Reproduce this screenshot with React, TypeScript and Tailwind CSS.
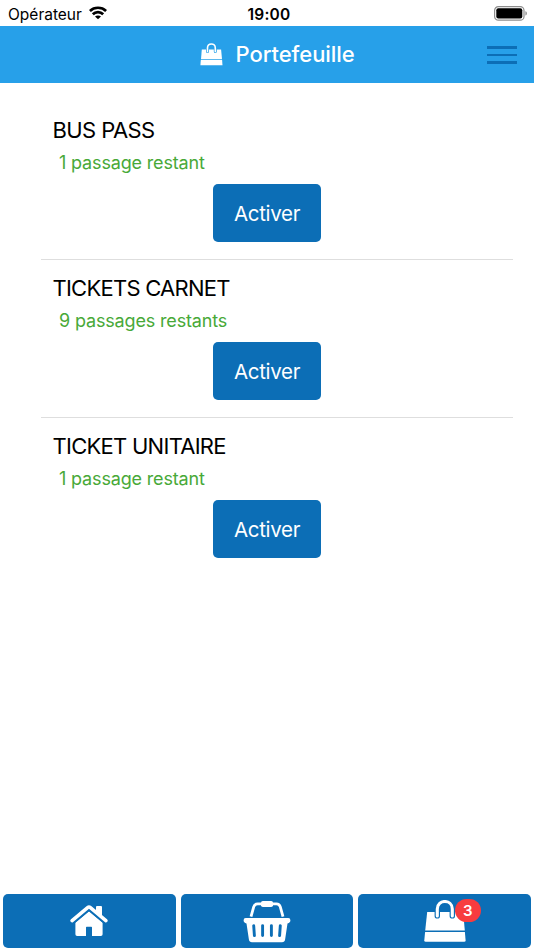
import React from "react";

function WifiIcon() {
  return (
    <svg className="mb-[2px] h-[14px] w-[18px]" viewBox="0 0 18 14" fill="none" stroke="#000" strokeWidth="2.7">
      <path d="M0.9 4.9C5.3 .7 12.7 .7 17.1 4.9" />
      <path d="M3.8 8.3C6.7 5.4 11.3 5.4 14.2 8.3" />
      <path d="M9 13.3L6 10.4C7.6 9.1 10.4 9.1 12 10.4Z" fill="#000" stroke="none" />
    </svg>
  );
}

function BatteryIcon() {
  return (
    <svg className="h-[15px] w-[34px]" viewBox="0 0 34 15">
      <rect x="0.6" y="0.6" width="29.4" height="13.6" rx="3.8" fill="none" stroke="#8d8d8d" strokeWidth="1.2" />
      <rect x="2.3" y="2.3" width="26" height="10.2" rx="2" fill="#000" />
      <path d="M31.4 5.3C33.4 5.8 33.4 9 31.4 9.5Z" fill="#8d8d8d" />
    </svg>
  );
}

function BagIcon({ className }: { className: string }) {
  return (
    <svg className={className} viewBox="0 0 42 42" fill="none">
      <path d="M3.2 12H39.2L40.8 30.6H1.2Z" fill="#fff" />
      <path d="M1.1 31.9H40.9L41.6 40.2Q41.7 41.7 40.2 41.7H1.7Q.2 41.7.3 40.2Z" fill="#fff" />
      <path d="M13.3 15.9V9C13.3-1 28.3-1 28.3 9V15.9" stroke="#0c6eb6" strokeWidth="5.4" strokeLinecap="round" />
      <path d="M13.3 15.9V9C13.3-1 28.3-1 28.3 9V15.9" stroke="#fff" strokeWidth="3.1" strokeLinecap="round" />
    </svg>
  );
}

function HeaderBagIcon() {
  return (
    <svg className="h-[23px] w-[23px]" viewBox="0 0 23 23" fill="none">
      <path d="M1.8 6.5H21.1L22 16.2H1Z" fill="#fff" />
      <path d="M.8 17.1H22.1L22.5 22.2H.4Z" fill="#fff" />
      <path d="M7.5 8.6V5C7.5-.4 15.3-.4 15.3 5V8.6" stroke="#27a0e9" strokeWidth="3" strokeLinecap="round" />
      <path d="M7.5 8.6V5C7.5-.4 15.3-.4 15.3 5V8.6" stroke="#fff" strokeWidth="1.6" strokeLinecap="round" />
    </svg>
  );
}

function HomeIcon() {
  return (
    <svg className="h-[32px] w-[38px]" viewBox="0 0 38 32" fill="none">
      <path d="M26 9V2Q26 1 27 1H31Q32 1 32 2V13L26 8Z" fill="#fff" />
      <path d="M2.1 15.7L17.6 2.6Q19 1.4 20.4 2.6L35.9 15.7" stroke="#fff" strokeWidth="3.5" strokeLinecap="round" />
      <path d="M19 6.2L32.6 17.6V29.3Q32.6 31 30.9 31H22V22.4Q22 21.7 21.3 21.7H16.7Q16 21.7 16 22.4V31H7.1Q5.4 31 5.4 29.3V17.6Z" fill="#fff" />
      <path d="M4.7 17.6L19 5.5L33.3 17.6" stroke="#0c6eb6" strokeWidth="1.1" />
    </svg>
  );
}

function BasketIcon() {
  return (
    <svg className="h-[43px] w-[48px]" viewBox="0 0 48 43" fill="none">
      <path d="M8 16.6L10.7 6.8Q11.6 3.9 14.6 3.9H33.4Q36.4 3.9 37.3 6.8L40 16.6" stroke="#fff" strokeWidth="2.8" />
      <rect x="18" y="1" width="12" height="6" rx="1.8" fill="#fff" />
      <path d="M2.7 18H45.3Q47.4 18 47.4 20.2Q47.4 22.8 44.5 23.4L42.1 39.5Q41.7 42.3 39 42.3H9Q6.3 42.3 5.9 39.5L3.5 23.4Q.6 22.8.6 20.2Q.6 18 2.7 18Z" fill="#fff" />
      <path d="M10.7 25.6L11.4 35.6M19.6 25.6V35.6M28.4 25.6V35.6M37.3 25.6L36.6 35.6" stroke="#0c6eb6" strokeWidth="2.9" strokeLinecap="round" />
    </svg>
  );
}

const tickets = [
  { name: "BUS PASS", left: "1 passage restant", spacing: "tracking-[-0.6px]" },
  { name: "TICKETS CARNET", left: "9 passages restants", spacing: "tracking-[-0.75px]" },
  { name: "TICKET UNITAIRE", left: "1 passage restant", spacing: "tracking-[-0.73px]" },
];

export default function App() {
  return (
    <div className="flex h-[950px] w-[534px] flex-col overflow-hidden bg-white font-['Inter',sans-serif] text-black">
      <div className="grid h-[26px] shrink-0 grid-cols-3 items-center">
        <div className="flex items-center gap-[7px] pl-2 text-[15.5px] leading-[26px]">
          <span className="w-[74px] pt-px whitespace-nowrap">Opérateur</span>
          <WifiIcon />
        </div>
        <div className="pt-[2px] pl-1 text-center text-[15.5px] leading-[26px] font-semibold tracking-[0.2px]">19:00</div>
        <div className="flex justify-end pr-[6px] pb-px"><BatteryIcon /></div>
      </div>
      <header className="flex h-[57px] shrink-0 items-center bg-[#27a0e9] pl-[200px]">
        <HeaderBagIcon />
        <h1 className="w-[251px] pb-[2px] pl-[12.5px] text-[22px] leading-7 font-medium tracking-[-0.05px] text-white">Portefeuille</h1>
        <div className="ml-[13px] flex w-[30px] flex-col gap-[5px] pt-px">
          <span className="h-[2.5px] bg-[#0c6eb6]" />
          <span className="h-[2.5px] bg-[#0c6eb6]" />
          <span className="h-[2.5px] bg-[#0c6eb6]" />
        </div>
      </header>
      <main className="flex-1 pt-[19px] pr-[21px] pl-[41px]">
        {tickets.map((t, i) => (
          <section key={t.name} className={i < 2 ? "h-[158px] border-b border-[#dedede] pt-[13px] pl-[11px]" : "h-[158px] pt-[13px] pl-[11px]"}>
            <h2 className={`pl-[0.5px] text-[22px] leading-[30px] ${t.spacing}`}>{t.name}</h2>
            <p className="mt-[4px] pl-[7px] text-[18px] leading-[28px] tracking-[-0.16px] text-[#48a938]">{t.left}</p>
            <button className="mt-[7px] ml-[161px] block h-[58px] w-[108px] rounded-[5px] bg-[#0c6eb6] pt-[2px] text-[20.5px] tracking-[-0.3px] text-white">Activer</button>
          </section>
        ))}
      </main>
      <nav className="grid h-[56px] shrink-0 grid-cols-3 gap-[5px] px-[3px] pb-[2px]">
        <button className="flex items-center justify-center rounded-[5px] bg-[#0c6eb6]"><HomeIcon /></button>
        <button className="flex items-center justify-center rounded-[5px] bg-[#0c6eb6]"><BasketIcon /></button>
        <button className="flex items-center justify-center rounded-[5px] bg-[#0c6eb6]">
          <span className="relative">
            <BagIcon className="h-[42px] w-[42px]" />
            <span className="absolute -top-px left-[31px] flex h-[23px] w-[26px] items-center justify-center rounded-full bg-[#f73c3f] pt-px text-[15px] font-semibold text-white">3</span>
          </span>
        </button>
      </nav>
    </div>
  );
}
